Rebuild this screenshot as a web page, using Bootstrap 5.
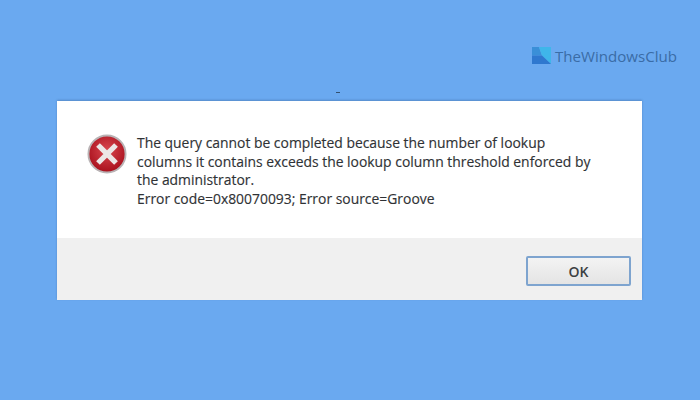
<!DOCTYPE html>
<html lang="en">
<head>
    <meta charset="UTF-8">
    <meta name="viewport" content="width=device-width, initial-scale=1.0">
    <title>Error dialog</title>
    <link href="https://cdn.jsdelivr.net/npm/bootstrap@5.3.0/dist/css/bootstrap.min.css" rel="stylesheet">
    <style>
        body { background: #6aa9f0; height: 400px; overflow: hidden; }
        .stage { width: 700px; height: 400px; padding-top: 47px; }
        .brand-row { height: 54px; padding-right: 23px; }
        .brand-text { font: 15.1px/18px "Open Sans", sans-serif; color: #3a6ca6; }
        .dialog { width: 585px; height: 199px; margin-left: 57px; background: #fff; box-shadow: 0 -1px 2px rgba(60,100,150,.45); }
        .dialog-top { height: 137px; padding: 33px 0 0 30px; }
        .dialog-msg { margin-left: 2px; font: 13.9px/18.5px "Open Sans", sans-serif; color: #2f3235; -webkit-text-stroke: .15px #2f3235; }
        .dialog-foot { height: 62px; background: #f0f0f0; padding: 18px 11px 0 0; }
        .ok-btn { width: 105px; height: 30px; padding: 0; border: 2px solid #7ea4cf; border-radius: 2px; background: linear-gradient(#f3f3f3, #e4e4e4); font: 600 14px "Open Sans", sans-serif; color: #3c3f42; }
        .tick { position: absolute; left: 336px; top: 92px; width: 4px; height: 1px; background: #33506f; }
    </style>
</head>
<body>
    <div class="stage position-relative">
        <div class="brand-row d-flex justify-content-end align-items-start gap-1">
            <svg width="19" height="17" viewBox="0 0 19 17">
                <path d="M0 0H7L10 8.5H0Z" fill="#3a8fd8"/>
                <path d="M7 0H19V17L10 8.5Z" fill="#3fb6ea"/>
                <path d="M0 8.5H10L19 17H0Z" fill="#2f78cf"/>
            </svg>
            <span class="brand-text">TheWindowsClub</span>
        </div>
        <span class="tick"></span>
        <div class="dialog d-flex flex-column">
            <div class="dialog-top d-flex">
                <svg class="flex-shrink-0 me-2" width="40" height="40" viewBox="0 0 42 42">
                    <defs>
                        <radialGradient id="redFill" cx="50%" cy="40%" r="60%">
                            <stop offset="0" stop-color="#d9474f"/>
                            <stop offset="1" stop-color="#a80f1c"/>
                        </radialGradient>
                    </defs>
                    <circle cx="21" cy="21" r="19.5" fill="url(#redFill)" stroke="#b9b3b5" stroke-width="2"/>
                    <path d="M13.5 13.5L28.5 28.5M28.5 13.5L13.5 28.5" stroke="#ece6e6" stroke-width="5.5" stroke-linecap="square"/>
                </svg>
                <div class="dialog-msg text-nowrap">
                    The query cannot be completed because the number of lookup<br>
                    columns it contains exceeds the lookup column threshold enforced by<br>
                    the administrator.<br>
                    Error code=0x80070093; Error source=Groove
                </div>
            </div>
            <div class="dialog-foot d-flex justify-content-end align-items-start">
                <button type="button" class="btn ok-btn">OK</button>
            </div>
        </div>
    </div>
    <script src="https://cdn.jsdelivr.net/npm/bootstrap@5.3.0/dist/js/bootstrap.bundle.min.js"></script>
</body>
</html>
